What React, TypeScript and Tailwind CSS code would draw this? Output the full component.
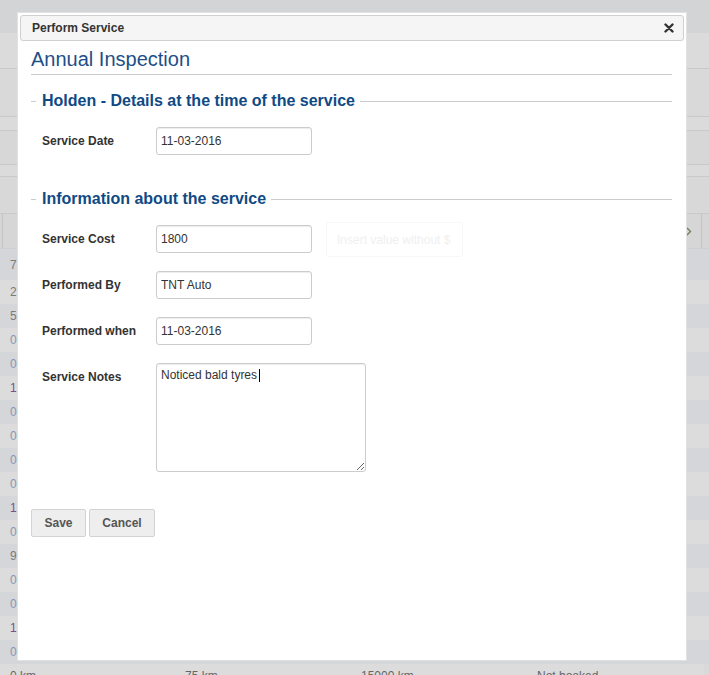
const font = { fontFamily: '"Liberation Sans", Arial, sans-serif' };

const rowDigits = [
  { d: "2", c: "text-[#7a7a7a]" },
  { d: "5", c: "text-[#7a7a7a]" },
  { d: "0", c: "text-[#8797b4]" },
  { d: "0", c: "text-[#8797b4]" },
  { d: "1", c: "text-[#7b4f8c]" },
  { d: "0", c: "text-[#8797b4]" },
  { d: "0", c: "text-[#8797b4]" },
  { d: "0", c: "text-[#8797b4]" },
  { d: "0", c: "text-[#8797b4]" },
  { d: "1", c: "text-[#7b4f8c]" },
  { d: "0", c: "text-[#8797b4]" },
  { d: "9", c: "text-[#7a7a7a]" },
  { d: "0", c: "text-[#8797b4]" },
  { d: "0", c: "text-[#8797b4]" },
  { d: "1", c: "text-[#7b4f8c]" },
  { d: "0", c: "text-[#8797b4]" },
];

const Background = () => (
  <div className="flex flex-col text-[12px]">
    <div className="h-[33px] bg-[#d3d4d6]" />
    <div className="h-[36px] bg-[#dbdbdb] border-b border-[#c9c9c9]" />
    <div className="h-[48px] bg-[#d9d9d9] border-b border-[#c9c9c9]" />
    <div className="h-[14px] bg-[#dbdbdb] border-b border-[#c9c9c9]" />
    <div className="h-[34px] bg-[#d7d7d7] border-b border-[#c9c9c9]" />
    <div className="h-[12px] bg-[#dbdbdb] border-b border-[#c9c9c9]" />
    <div className="h-[37px] bg-[#d8d8d8] border-b border-[#c9c9c9]" />
    <div className="h-[35px] bg-[#d6d6d6] flex justify-between border-b border-[#cfcfcf]">
      <div className="w-[3px] border-r border-[#c4c4c4]" />
      <div className="flex items-center">
        <svg width="6" height="9" viewBox="0 0 6 9" className="mr-[9px]">
          <path d="M1 1l3.5 3.5L1 8" fill="none" stroke="#6b7d5a" strokeWidth="1.3" />
        </svg>
        <div className="w-[8px] h-full border-l border-[#c4c4c4]" />
      </div>
    </div>
    <div className="h-[31px] bg-[#d5d6da] flex items-center pl-[10px] text-[#7a7a7a]">7</div>
    {rowDigits.map((r, i) => (
      <div
        key={i}
        className={`h-[24px] flex items-center pl-[10px] ${r.c} ${i % 2 === 0 ? "bg-[#dcdcdc]" : "bg-[#d5d6da]"}`}
      >
        {r.d}
      </div>
    ))}
    <div className="h-[24px] bg-[#dcdcdc] grid grid-cols-4 w-[704px] items-center text-[#666]">
      <span className="pl-[10px]">0 km</span>
      <span className="pl-[9px]">75 km</span>
      <span className="pl-[9px]">15000 km</span>
      <span className="pl-[9px]">Not booked</span>
    </div>
  </div>
);

const Legend = ({ text }: { text: string }) => (
  <div className="flex items-center h-[18px]">
    <div className="w-[5px] h-px bg-[#cccccc] mt-[1px]" />
    <span className="ml-[6px] mr-[5px] text-[16px] leading-[18px] font-bold text-[#0f4a84]">{text}</span>
    <div className="flex-1 h-px bg-[#cccccc] mt-[1px]" />
  </div>
);

const Field = ({ label, value }: { label: string; value: string }) => (
  <div className="flex items-start pl-[11px]">
    <label className="w-[114px] pt-[7px] text-[12px] leading-[14px] font-bold text-[#333]">{label}</label>
    <input
      readOnly
      defaultValue={value}
      className="w-[156px] h-[28px] px-[4px] border border-[#cccccc] rounded-[3px] text-[12px] text-[#333] shadow-[inset_0_1px_1px_rgba(0,0,0,0.075)] outline-none"
      style={font}
    />
  </div>
);

export default function App() {
  return (
    <div className="relative w-full h-[675px] overflow-hidden bg-[#d9d9d9]" style={font}>
      <Background />

      <div className="absolute left-[17px] top-[12px] w-[670px] h-[649px] bg-white border border-[#e2e2e2] p-[2px] flex flex-col">
        <div className="h-[26px] flex items-center justify-between pl-[11px] pr-[9px] bg-[#f5f5f5] border border-[#d0d0d0] rounded-[3px]">
          <span className="text-[12px] font-bold text-[#333]">Perform Service</span>
          <svg width="10" height="10" viewBox="0 0 10 10">
            <path d="M1.5 1.5l7 7M8.5 1.5l-7 7" stroke="#333" strokeWidth="2.4" strokeLinecap="round" />
          </svg>
        </div>

        <div className="pl-[11px] pr-[12px] flex flex-col">
          <h1 className="mt-[7px] text-[20px] leading-[22px] text-[#1d4f87]">Annual Inspection</h1>
          <div className="mt-[4px] h-px bg-[#cccccc]" />

          <div className="mt-[17px]">
            <Legend text="Holden - Details at the time of the service" />
          </div>
          <div className="mt-[17px]">
            <Field label="Service Date" value="11-03-2016" />
          </div>

          <div className="mt-[35px]">
            <Legend text="Information about the service" />
          </div>
          <div className="mt-[17px] flex flex-col gap-[18px]">
            <div className="relative">
              <Field label="Service Cost" value="1800" />
              <div className="absolute left-[295px] top-[-3px] w-[137px] h-[35px] border border-[#f7f7f7] rounded-[3px] flex items-center pl-[10px] text-[12px] text-[#f0f0f0]">
                Insert value without $
              </div>
            </div>
            <Field label="Performed By" value="TNT Auto" />
            <Field label="Performed when" value="11-03-2016" />
            <div className="flex items-start pl-[11px]">
              <label className="w-[114px] pt-[7px] text-[12px] leading-[14px] font-bold text-[#333]">Service Notes</label>
              <div className="relative">
                <textarea
                  readOnly
                  defaultValue="Noticed bald tyres"
                  className="block w-[210px] h-[109px] p-[4px] border border-[#cccccc] rounded-[3px] text-[12px] leading-[14px] text-[#333] shadow-[inset_0_1px_1px_rgba(0,0,0,0.075)] outline-none"
                  style={font}
                />
                <span className="absolute left-[103px] top-[6px] w-px h-[13px] bg-black" />
              </div>
            </div>
          </div>

          <div className="mt-[37px] flex gap-[3px]">
            <button className="w-[55px] h-[28px] bg-[#eeeeee] border border-[#d3d3d3] rounded-[2px] text-[12px] font-bold text-[#555]">
              Save
            </button>
            <button className="w-[66px] h-[28px] bg-[#eeeeee] border border-[#d3d3d3] rounded-[2px] text-[12px] font-bold text-[#555]">
              Cancel
            </button>
          </div>
        </div>
      </div>
    </div>
  );
}
